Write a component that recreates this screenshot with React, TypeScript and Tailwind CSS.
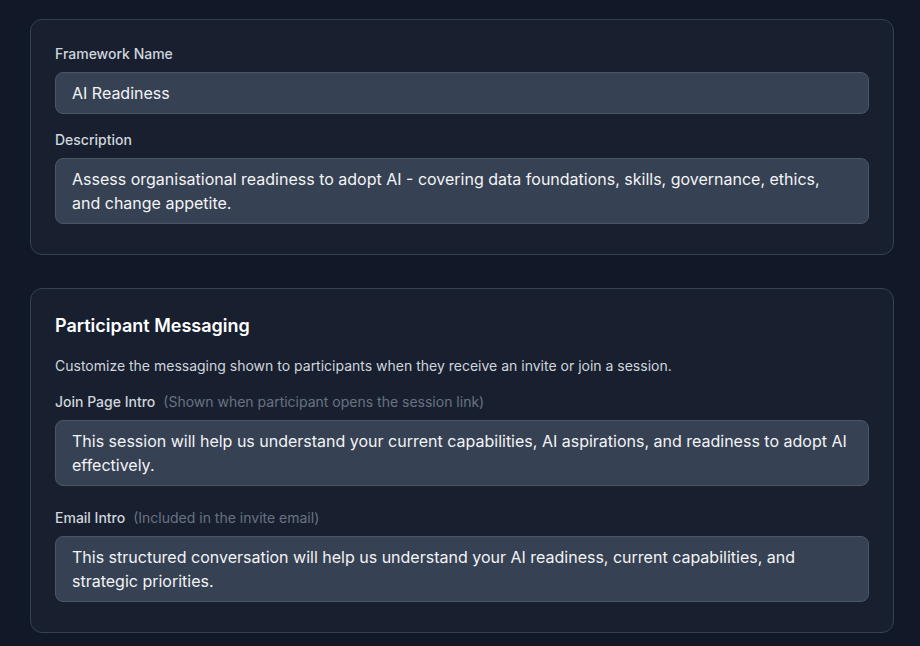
import React from 'react';

const font = { fontFamily: 'Inter, "Noto Sans", sans-serif' };

const Field: React.FC<{ label: string; hint?: string; value: string; multiline?: boolean; last?: boolean }> = ({
  label,
  hint,
  value,
  multiline,
  last,
}) => (
  <div className={last ? '' : multiline ? 'mb-[22px]' : 'mb-4'}>
    <label className="block mb-2 text-sm leading-5 font-medium text-gray-300">
      {label}
      {hint && <span className="ml-2 font-normal text-gray-500">{hint}</span>}
    </label>
    {multiline ? (
      <textarea
        readOnly
        rows={2}
        value={value}
        className="block w-full resize-none overflow-hidden rounded-lg border border-gray-600 bg-gray-700 px-4 py-2 text-base leading-6 text-gray-100 outline-none"
      />
    ) : (
      <input
        readOnly
        value={value}
        className="block w-full h-[42px] rounded-lg border border-gray-600 bg-gray-700 px-4 py-2 text-base leading-6 text-gray-100 outline-none"
      />
    )}
  </div>
);

export default function App() {
  return (
    <div className="min-h-[646px] bg-[#111827] pl-[30px] pr-[26px] pt-[19px] pb-6" style={font}>
      {/* Framework details */}
      <div className="rounded-xl border border-gray-700 bg-[#182030] px-6 pt-6 pb-[30px]">
        <Field label="Framework Name" value="AI Readiness" />
        <Field
          label="Description"
          multiline
          last
          value="Assess organisational readiness to adopt AI - covering data foundations, skills, governance, ethics, and change appetite."
        />
      </div>

      {/* Participant messaging */}
      <div className="mt-[33px] rounded-xl border border-gray-700 bg-[#182030] px-6 pt-[23px] pb-[30px]">
        <h3 className="text-lg leading-7 font-semibold text-white mb-4">Participant Messaging</h3>
        <p className="text-sm leading-5 text-gray-300 mb-4">
          Customize the messaging shown to participants when they receive an invite or join a session.
        </p>
        <Field
          label="Join Page Intro"
          hint="(Shown when participant opens the session link)"
          multiline
          value="This session will help us understand your current capabilities, AI aspirations, and readiness to adopt AI effectively."
        />
        <Field
          label="Email Intro"
          hint="(Included in the invite email)"
          multiline
          last
          value="This structured conversation will help us understand your AI readiness, current capabilities, and strategic priorities."
        />
      </div>
    </div>
  );
}
